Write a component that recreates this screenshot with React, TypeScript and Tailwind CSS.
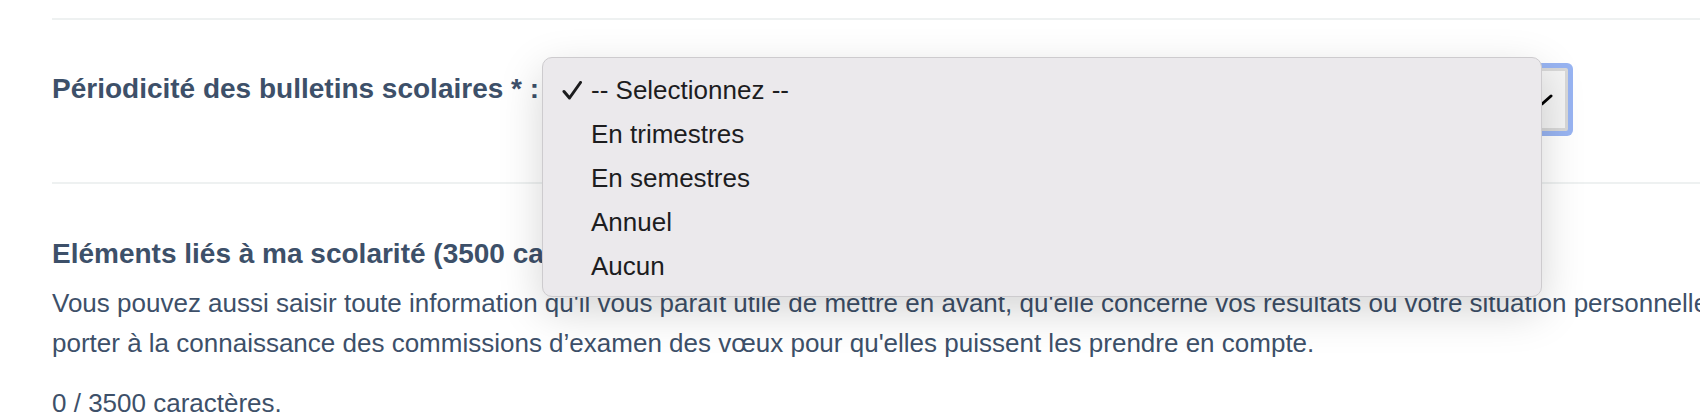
import React from "react";

const options = ["-- Selectionnez --", "En trimestres", "En semestres", "Annuel", "Aucun"];

function CheckMark() {
	return (
		<svg width="20" height="20" viewBox="0 0 20 20" fill="none" className="mt-[2px]">
			<path
				d="M2 10.5 L7.5 17 L18.5 1.5"
				stroke="#1c1c1e"
				strokeWidth="3"
				strokeLinecap="round"
				strokeLinejoin="round"
			/>
		</svg>
	);
}

function Chevron() {
	return (
		<svg width="22" height="12" viewBox="0 0 22 12" fill="none">
			<path d="M2 2 L11 10 L20 2" stroke="#000" strokeWidth="3" strokeLinecap="round" strokeLinejoin="round" />
		</svg>
	);
}

function OptionsMenu() {
	return (
		<div className="absolute left-[542px] top-[57px] w-[1000px] h-[240px] rounded-[10px] border border-[#cdcbce] bg-[#ebe9ec] py-[10px] shadow-[0_14px_44px_rgba(0,0,0,0.17)]">
			{options.map((opt, i) => (
				<div key={opt} className="flex items-center h-[44px] text-[26px] leading-[44px] text-[#1d1d1f]">
					<div className="w-[48px] pl-[19px] flex items-center">{i === 0 && <CheckMark />}</div>
					<span>{opt}</span>
				</div>
			))}
		</div>
	);
}

export default function App() {
	return (
		<div className="relative w-full h-[420px] overflow-hidden bg-white font-['Liberation_Sans',Arial,sans-serif] text-[#3d5069]">
			<div className="ml-[52px] w-[2200px]">
				<div className="mt-[18px] border-t-2 border-[#eef1f1]">
					<div className="flex items-start h-[162px]">
						<label className="mt-[52px] text-[28px] leading-[34px] font-bold whitespace-nowrap">
							Périodicité des bulletins scolaires * :
						</label>
						<div className="mt-[48px] ml-[12px] h-[63px] w-[1017px] rounded-[2px] border-[3px] border-[#d8d8d8] bg-[#f4f4f4] shadow-[0_0_0_5px_#98b4f2] flex items-center justify-between pl-[36px] pr-[12px]">
							<span className="text-[26px] text-[#1d1d1f]">-- Selectionnez --</span>
							<Chevron />
						</div>
					</div>
				</div>
				<div className="border-t-2 border-[#eef1f1] pt-[53px]">
					<h3 className="text-[28px] leading-[34px] font-bold">Eléments liés à ma scolarité (3500 caractères maximum)</h3>
					<p className="mt-[12px] text-[26px] leading-[40px]">
						Vous pouvez aussi saisir toute information qu'il vous paraît utile de mettre en avant, qu'elle concerne vos résultats ou votre situation personnelle, pour la
						<br />
						porter à la connaissance des commissions d’examen des vœux pour qu'elles puissent les prendre en compte.
					</p>
					<p className="mt-[20px] text-[26px] leading-[40px]">0 / 3500 caractères.</p>
				</div>
			</div>
			<OptionsMenu />
		</div>
	);
}
